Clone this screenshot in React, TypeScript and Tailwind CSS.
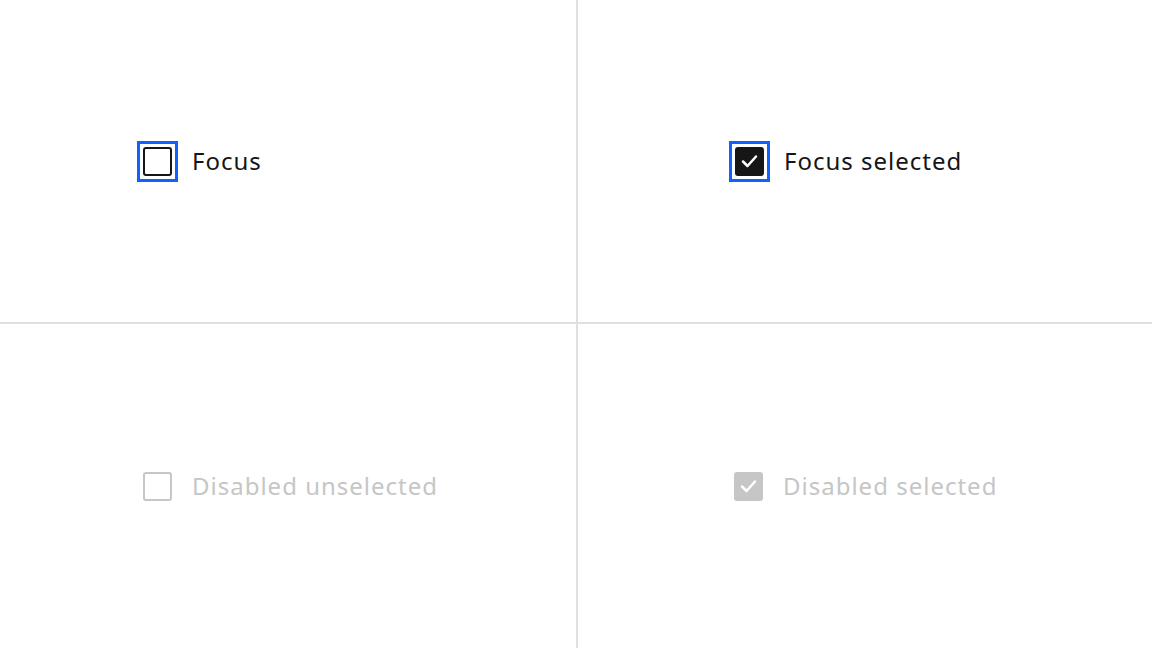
const font = { fontFamily: '"Noto Sans", "Open Sans", Arial, sans-serif' };

type BoxProps = { checked?: boolean; focused?: boolean; disabled?: boolean };

function Box({ checked, focused, disabled }: BoxProps) {
  const tone = disabled ? "border-[#c6c6c6]" : "border-[#161616]";
  const fill = checked ? (disabled ? "bg-[#c6c6c6]" : "bg-[#161616]") : "bg-white";
  return (
    <span className="relative shrink-0">
      {focused && <span className="absolute -inset-[6px] border-[3px] border-[#0f62fe]" />}
      <span className={`relative block h-[29px] w-[29px] rounded-[3px] border-2 ${tone} ${fill}`}>
        {checked && (
          <svg className="absolute inset-0" width="25" height="25" viewBox="0 0 25 25" fill="none">
            <path d="M6 12.5 L10.5 17 L19 7.5" stroke="white" strokeWidth="2.5" strokeLinecap="round" strokeLinejoin="round" />
          </svg>
        )}
      </span>
    </span>
  );
}

function Option({ label, ...box }: BoxProps & { label: string }) {
  return (
    <label className="flex items-center gap-[20px]">
      <Box {...box} />
      <span
        className={`text-[24px] leading-none tracking-[1px] ${box.disabled ? "text-[#c6c6c6]" : "text-[#161616]"}`}
        style={font}
      >
        {label}
      </span>
    </label>
  );
}

export default function App() {
  return (
    <div className="grid h-[648px] w-[1152px] grid-cols-[576px_1fr] grid-rows-[322px_1fr] gap-[2px] bg-[#e0e0e0]">
      <div className="flex items-center bg-white pl-[143px]">
        <Option label="Focus" focused />
      </div>
      <div className="flex items-center bg-white pl-[157px]">
        <Option label="Focus selected" focused checked />
      </div>
      <div className="flex items-center bg-white pl-[143px]">
        <Option label="Disabled unselected" disabled />
      </div>
      <div className="flex items-center bg-white pl-[156px]">
        <Option label="Disabled selected" disabled checked />
      </div>
    </div>
  );
}
